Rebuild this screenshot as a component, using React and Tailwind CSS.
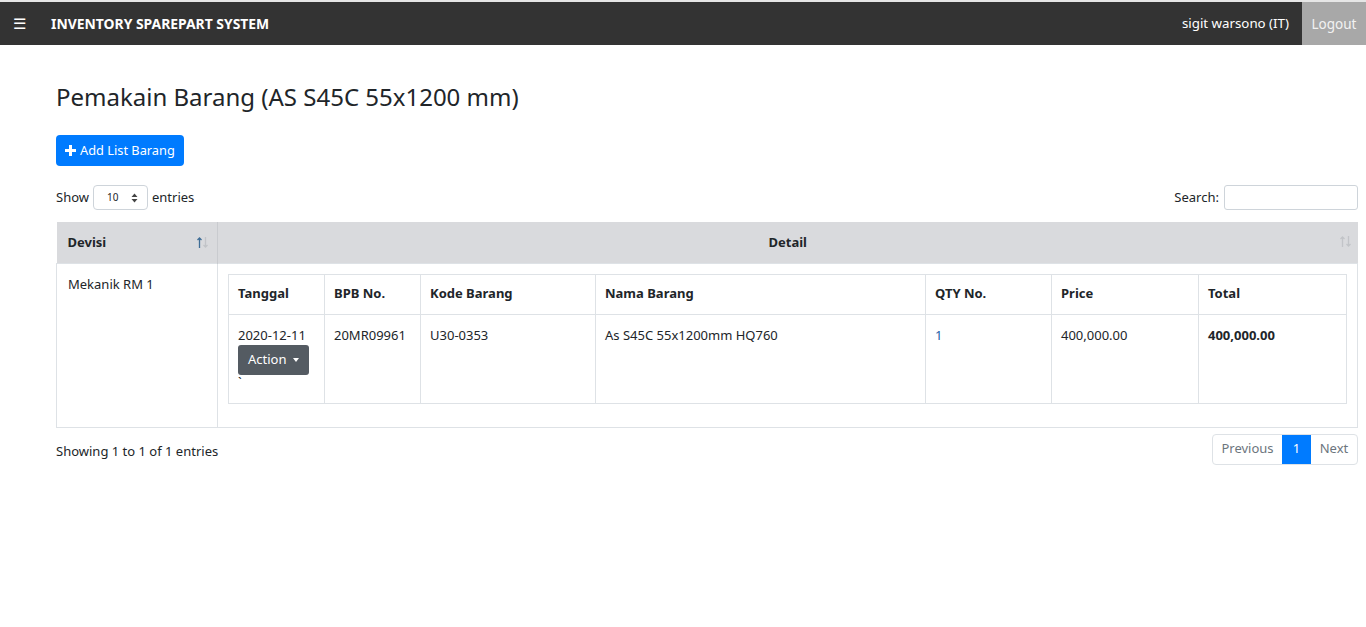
import React from 'react'

const font = { fontFamily: '"Noto Sans", "Open Sans", Arial, sans-serif' }

function SortIcon({ active }) {
  const up = active ? '#3f6d96' : '#c2c4c8'
  return (
    <svg width="11" height="11" viewBox="0 0 11 11">
      <path d="M2.5 1v10M0.5 3l2-2 2 2" stroke={up} strokeWidth="1.3" fill="none" />
      <path d="M8.5 0v10M6.5 8l2 2 2-2" stroke="#c2c4c8" strokeWidth="1.3" fill="none" />
    </svg>
  )
}

function TopBar() {
  return (
    <div className="border-t-2 border-[#e6e6e6] bg-[#333333] h-[45px] flex items-stretch">
      <div className="flex items-center pl-[13px] w-[51px] text-white text-[15px]">☰</div>
      <div className="flex items-center text-white font-bold text-[13.9px] pt-[1px]">INVENTORY SPAREPART SYSTEM</div>
      <div className="flex-1" />
      <div className="flex items-center text-white text-[13.3px] pr-[13px] pt-[1px]">sigit warsono (IT)</div>
      <div className="flex items-center bg-[#a8a8a8] text-[#f2f2f2] text-[13.5px] w-[64px] justify-center pt-[1px]">Logout</div>
    </div>
  )
}

const innerCols = [
  { label: 'Tanggal', w: 'w-[96px]' },
  { label: 'BPB No.', w: 'w-[96px]' },
  { label: 'Kode Barang', w: 'w-[175px]' },
  { label: 'Nama Barang', w: 'w-[330px]' },
  { label: 'QTY No.', w: 'w-[126px]' },
  { label: 'Price', w: 'w-[147px]' },
  { label: 'Total', w: '' },
]

function DetailTable() {
  return (
    <table className="w-full border-collapse text-[13px] text-[#212529]">
      <thead>
        <tr>
          {innerCols.map((c) => (
            <th key={c.label} className={`${c.w} border border-[#dee2e6] text-left font-bold px-[9px] h-[40px]`}>
              {c.label}
            </th>
          ))}
        </tr>
      </thead>
      <tbody>
        <tr className="align-top">
          <td className="border border-[#dee2e6] px-[9px] pt-[10px] h-[89px]">
            <div className="leading-[20px]">2020-12-11</div>
            <button className="bg-[#545b62] text-white rounded-[3px] px-[10px] h-[30px] text-[13px] flex items-center gap-[6px]">
              Action
              <span className="inline-block border-x-[3.5px] border-x-transparent border-t-[4px] border-t-white" />
            </button>
            <div className="leading-[14px] h-[14px]">`</div>
          </td>
          <td className="border border-[#dee2e6] px-[9px] pt-[10px] leading-[20px]">20MR09961</td>
          <td className="border border-[#dee2e6] px-[9px] pt-[10px] leading-[20px]">U30-0353</td>
          <td className="border border-[#dee2e6] px-[9px] pt-[10px] leading-[20px]">As S45C 55x1200mm HQ760</td>
          <td className="border border-[#dee2e6] px-[9px] pt-[10px] leading-[20px] text-[#1f5fa8]">1</td>
          <td className="border border-[#dee2e6] px-[9px] pt-[10px] leading-[20px]">400,000.00</td>
          <td className="border border-[#dee2e6] px-[9px] pt-[10px] leading-[20px] font-bold">400,000.00</td>
        </tr>
      </tbody>
    </table>
  )
}

export default function App() {
  return (
    <div className="min-h-[627px] bg-white text-[#212529]" style={font}>
      <TopBar />
      <div className="px-[56px] pr-[8px]">
        <h1 className="text-[24px] font-normal mt-[35px] mb-[21px] leading-[34px]">Pemakain Barang (AS S45C 55x1200 mm)</h1>
        <button className="bg-[#007bff] text-white text-[12.8px] rounded-[4px] h-[31px] px-[9px] flex items-center gap-[4px]">
          <svg width="11" height="11" viewBox="0 0 11 11"><path d="M4 0h3v4h4v3H7v4H4V7H0V4h4z" fill="white" /></svg>
          Add List Barang
        </button>
        <div className="flex items-center justify-between mt-[19px] h-[25px] text-[13px]">
          <div className="flex items-center gap-[4px]">
            <span>Show</span>
            <div className="w-[55px] h-[25px] border border-[#ced4da] rounded-[4px] flex items-center justify-between pl-[13px] pr-[9px] text-[10px]">
              <span>10</span>
              <svg width="7" height="10" viewBox="0 0 7 10"><path d="M0.5 4L3.5 0.5L6.5 4z M0.5 6L3.5 9.5L6.5 6z" fill="#444" /></svg>
            </div>
            <span>entries</span>
          </div>
          <div className="flex items-center gap-[5px]">
            <span>Search:</span>
            <div className="w-[134px] h-[25px] border border-[#ced4da] rounded-[3px]" />
          </div>
        </div>
        <table className="w-full border-collapse mt-[12px] text-[13px]">
          <thead>
            <tr className="bg-[#d9dadd]">
              <th className="w-[161px] h-[41px] text-left font-bold pl-[11px] pr-[9px] border-r border-[#c9cbcf]">
                <div className="flex items-center justify-between">
                  <span>Devisi</span>
                  <SortIcon active />
                </div>
              </th>
              <th className="font-bold relative">
                Detail
                <span className="absolute right-[7px] top-[14px] flex"><SortIcon /></span>
              </th>
            </tr>
          </thead>
          <tbody>
            <tr className="align-top">
              <td className="border border-[#dee2e6] px-[11px] pt-[11px] h-[164px]">Mekanik RM 1</td>
              <td className="border border-[#dee2e6] px-[10px] pt-[10px] pb-[23px]">
                <DetailTable />
              </td>
            </tr>
          </tbody>
        </table>
        <div className="flex items-center justify-between mt-[6px] text-[13px]">
          <div className="pt-[6px]">Showing 1 to 1 of 1 entries</div>
          <div className="flex h-[31px] border border-[#dee2e6] rounded-[4px] overflow-hidden">
            <span className="w-[69px] flex items-center justify-center text-[#6c757d]">Previous</span>
            <span className="w-[29px] flex items-center justify-center bg-[#007bff] text-white">1</span>
            <span className="w-[46px] flex items-center justify-center text-[#6c757d]">Next</span>
          </div>
        </div>
      </div>
    </div>
  )
}
